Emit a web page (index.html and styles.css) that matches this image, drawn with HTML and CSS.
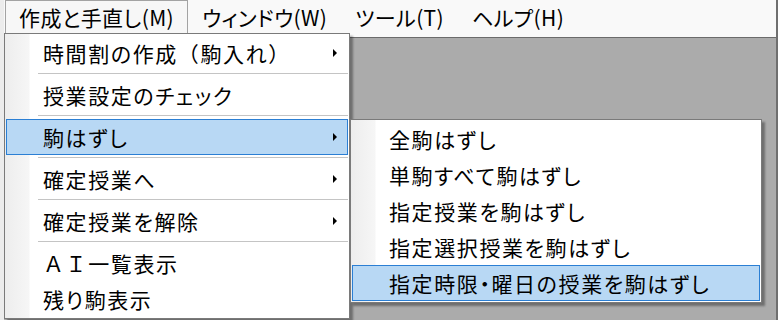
FILE: index.html
```html
<!DOCTYPE html>
<html lang="ja">
<head>
  <meta charset="UTF-8">
  <title>時間割 - メニュー</title>
  <link rel="stylesheet" href="styles.css">
</head>
<body>
  <div class="menubar">
    <div class="menu-title open">作成と手直し(M)</div>
    <div class="menu-title">ウィンドウ(W)</div>
    <div class="menu-title">ツール(T)</div>
    <div class="menu-title">ヘルプ(H)</div>
  </div>

  <!-- open popup menus -->
  <ul class="popup main-menu">
    <li class="item has-sub">時間割の作成<span class="fw">（</span>駒入れ<span class="fw">）</span></li>
    <li class="sep"></li>
    <li class="item">授業設定のチェック</li>
    <li class="sep"></li>
    <li class="item has-sub active">駒はずし</li>
    <li class="sep"></li>
    <li class="item has-sub">確定授業へ</li>
    <li class="sep"></li>
    <li class="item has-sub">確定授業を解除</li>
    <li class="sep"></li>
    <li class="item"><span class="fw">ＡＩ</span>一覧表示</li>
    <li class="item">残り駒表示</li>
  </ul>

  <ul class="popup sub-menu">
    <li class="item">全駒はずし</li>
    <li class="item">単駒すべて駒はずし</li>
    <li class="item">指定授業を駒はずし</li>
    <li class="item">指定選択授業を駒はずし</li>
    <li class="item active">指定時限・曜日の授業を駒はずし</li>
  </ul>
</body>
</html>
```

FILE: styles.css
```css
html, body { height: 100%; }
body {
  margin: 0;
  background-color: #ababab;
  border-left: 4px solid #ececec;
  border-right: 2px solid #6f6f6f;
  font-family: "Noto Sans CJK JP", "Noto Sans", sans-serif;
  font-size: 21px;
  font-feature-settings: "palt";
  color: #000;
  overflow: hidden;
  position: relative;
}
.fw { font-feature-settings: normal; }

.menubar {
  display: flex;
  height: 37px;
  padding-left: 1px;
  background-color: #f9f9f9;
  border-bottom: 1px solid #6b6b6b;
  letter-spacing: 0.4px;
}
.menu-title {
  height: 33px;
  line-height: 33px;
  padding: 0 13px;
  border: 1px solid transparent;
  border-bottom: none;
  white-space: nowrap;
}
.menu-title.open { border-color: #a3a3a3; background-color: #f7f7f7; }

.popup {
  position: absolute;
  list-style: none;
  margin: 0;
  padding: 1px;
  letter-spacing: 1.6px;
  background: linear-gradient(to right, #ededed 0, #f6f6f6 24px, #fff 25px);
  border: 1px solid #7a7a7a;
  box-shadow: 3px 3px 2px rgba(0, 0, 0, 0.35);
}
.main-menu { left: 0; top: 33px; width: 342px; }
.sub-menu { left: 346px; top: 119px; width: 408px; }

.item {
  display: flex;
  align-items: center;
  height: 36px;
  padding: 0 10px 0 36px;
  border: 1px solid transparent;
  box-sizing: border-box;
  white-space: nowrap;
}
.item.active { background-color: #b8d8f4; border-color: #2b7fd4; }
.item.has-sub::after {
  content: "";
  margin-left: auto;
  border-left: 4px solid #000;
  border-top: 4px solid transparent;
  border-bottom: 4px solid transparent;
}

.sep {
  height: 6px;
  margin-left: 32px;
  background: linear-gradient(#c4c4c4, #c4c4c4) no-repeat 0 2px / 100% 1px;
}
```
